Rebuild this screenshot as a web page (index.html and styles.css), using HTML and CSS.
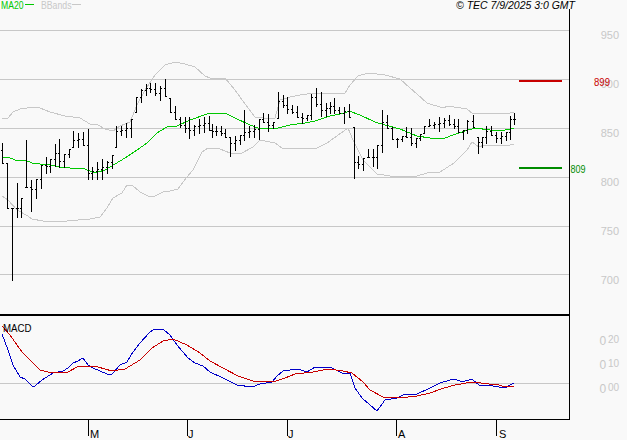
FILE: index.html
```html
<!DOCTYPE html>
<html lang="en">
<head>
<meta charset="utf-8">
<title>TEC chart</title>
<link rel="stylesheet" href="styles.css">
</head>
<body>
<svg class="chart" viewBox="0 0 627 440" width="627" height="440" xmlns="http://www.w3.org/2000/svg">
  <g class="grid">
    <path d="M0 30.5H569M0 79.5H569M0 128.5H569M0 177.5H569M0 226.5H569M0 274.5H569M0 383.5H569"/>
  </g>
  <g class="band">
    <polyline points="2,118 8,118 13,112 20,109 30,107.5 40,108 50,112 65,116 80,118 90,124 98,125 105,129 113,131 120,126 130,122 137,105 145,90 155,75 165,65 175,62 185,64 195,67 205,76 210,78 225,78 235,90 245,104 255,117 263,118 275,118 280,100 290,97 300,95 315,93 345,93 350,85 358,76 368,73 385,75 400,79 410,88 417,94 427,103 443,108 448,106 467,109 473,114 510,113 514,112"/>
    <polyline points="2,196 8,200 17,210 28,216 32,219 43,221 67,221 90,219 100,217 107,208 113,198 122,193 127,185 132,185 140,192 150,197 155,196 163,192 170,191 178,189 187,177 193,170 202,152 208,148 220,149 230,153 240,154 253,147 260,140 275,143 282,148 317,148 327,143 348,128 353,140 363,160 377,174 397,177 417,176 427,173 440,172 454,163 467,150 472,142 479,147 484,145 510,145 514,144"/>
  </g>
  <polyline class="ma" points="2,157 8,157 15,160 25,160 32,163 40,164 50,165 60,167 70,168 85,169 92,172 98,172 105,170 115,164 125,158 137,150 147,143 157,133 167,127 177,126 190,120 210,113 225,113 235,118 250,125 258,128 270,129 278,128 290,125 305,123 315,121 330,116 345,113 349,111 360,115 375,122 385,125 400,129 417,136 430,138 443,139 450,136 465,131 475,128 490,130 505,130 511,129 514,128"/>
  <path id="bars" class="bars"/>
  <path class="target-high" d="M519 81H562"/>
  <path class="target-low" d="M519 168H562"/>
  <polyline class="macd-line" points="2,334 8,350 13,365 20,377 25,379 32,386 35,386 42,380 53,373 63,371 68,368 73,363 78,361 83,358 88,365 93,368 100,371 107,374 112,374 120,365 127,362 133,352 140,343 150,332 155,329 163,329 170,335 177,345 188,358 195,363 203,366 210,372 223,378 237,385 252,387 260,384 272,382 277,376 283,371 298,369 307,372 315,367 330,367 342,373 350,373 355,388 362,398 377,411 385,400 397,398 405,394 417,394 430,388 440,383 450,380 455,379 462,382 472,379 480,386 487,385 499,387 505,388 510,385 514,383"/>
  <polyline class="macd-signal" points="2,326 10,335 22,352 30,360 40,370 48,372 68,372 77,367 90,366 98,367 112,371 125,369 140,360 152,348 163,341 173,339 187,345 200,353 210,361 223,368 238,376 253,381 273,382 285,378 295,374 313,372 328,369 343,371 352,373 363,382 370,390 383,397 397,398 408,397 417,396 430,393 444,388 455,385 472,382 489,384 499,385 505,387 514,386"/>
  <g class="frame">
    <path class="frame-thin" d="M569.5 9V419M0 419.5H570M88.5 419V436M187.5 419V436M287.5 419V436M396.5 419V436M496.5 419V436"/>
    <path class="frame-thick" d="M0 315H570"/>
  </g>
  <g class="legend-lines">
    <path class="ma-key" d="M25 4.5H34"/>
    <path class="band-key" d="M72 4.5H81"/>
  </g>
  <text class="label ma-text" x="1" y="8.5" textLength="22.5" lengthAdjust="spacingAndGlyphs">MA20</text>
  <text class="label band-text" x="41" y="8.5" textLength="30.5" lengthAdjust="spacingAndGlyphs">BBands</text>
  <text class="label copy" x="456" y="8.5" textLength="119" lengthAdjust="spacingAndGlyphs">© TEC 7/9/2025 3:0 GMT</text>
  <g class="label axis">
    <text x="619" y="39">950</text>
    <text x="619" y="87.5">900</text>
    <text x="619" y="137">850</text>
    <text x="619" y="186">800</text>
    <text x="619" y="235">750</text>
    <text x="619" y="284">700</text>
    <text x="619" y="345"><tspan class="int">0</tspan><tspan class="gap">.</tspan><tspan class="dec" dy="-2">20</tspan></text>
    <text x="619" y="369"><tspan class="int">0</tspan><tspan class="gap">.</tspan><tspan class="dec" dy="-2">10</tspan></text>
    <text x="619" y="393"><tspan class="int">0</tspan><tspan class="gap">.</tspan><tspan class="dec" dy="-2">00</tspan></text>
  </g>
  <text class="label red" x="594" y="86" textLength="16" lengthAdjust="spacingAndGlyphs">899</text>
  <text class="label green" x="570.5" y="173" textLength="15" lengthAdjust="spacingAndGlyphs">809</text>
  <text class="label macd" x="3" y="332" textLength="28.5" lengthAdjust="spacingAndGlyphs">MACD</text>
  <g class="label months">
    <text x="90" y="438">M</text>
    <text x="188" y="438">J</text>
    <text x="288" y="438">J</text>
    <text x="398" y="438">A</text>
    <text x="499" y="438">S</text>
  </g>
</svg>
<script src="chart.js"></script>
</body>
</html>
```

FILE: styles.css
```css
html, body {
  margin: 0;
  padding: 0;
  background: #f9f9f9;
}
.chart {
  display: block;
  background: #f9f9f9;
}
.grid path {
  fill: none;
  stroke: #c8c8c8;
  stroke-width: 1;
  shape-rendering: crispEdges;
}
.band polyline,
.ma,
.macd-line,
.macd-signal {
  fill: none;
  stroke-width: 1;
  shape-rendering: crispEdges;
}
.band polyline { stroke: #c8c8c8; }
.ma { stroke: #00c800; }
.macd-line { stroke: #0000c8; }
.macd-signal { stroke: #c80000; }
.bars {
  fill: none;
  stroke: #000;
  stroke-width: 1;
  shape-rendering: crispEdges;
}
.target-high,
.target-low {
  fill: none;
  stroke-width: 2;
  shape-rendering: crispEdges;
}
.target-high { stroke: #c80000; }
.target-low { stroke: #008c00; }
.frame path {
  fill: none;
  stroke: #000;
  shape-rendering: crispEdges;
}
.frame-thin { stroke-width: 1; }
.frame-thick { stroke-width: 2; }
.legend-lines path {
  fill: none;
  stroke-width: 1;
  shape-rendering: crispEdges;
}
.ma-key { stroke: #00c800; }
.band-key { stroke: #c8c8c8; }
.label {
  font-family: "Liberation Sans", Arial, sans-serif;
  font-size: 11px;
}
.ma-text { fill: #00c800; }
.band-text { fill: #c8c8c8; }
.copy { fill: #000; font-style: italic; }
.axis { fill: #c8c8c8; text-anchor: end; }
.int { font-size: 12px; }
.gap { fill: #f9f9f9; font-size: 6px; }
.dec { font-size: 10px; }
.red { fill: #c80000; }
.green { fill: #008c00; }
.macd { fill: #000; }
.months { fill: #000; }
```

FILE: chart.js
```js
var bars = [
  [2,143,163],[7,163,208],[12,208,280],[17,183,217],[21,198,217],[26,140,187],[31,180,211],[36,179,198],
  [41,165,188],[46,157,173],[50,159,172],[55,144,166],[59,139,167],[64,154,167],[69,149,157],[73,131,147],
  [78,133,147],[83,132,145],[88,129,179],[92,167,179],[97,162,179],[102,159,179],[107,161,173],[112,155,168],
  [116,126,147],[121,126,135],[126,123,137],[131,119,137],[136,97,112],[141,89,102],[146,84,95],[150,83,92],
  [155,83,95],[160,86,100],[165,79,96],[170,98,112],[175,106,119],[180,117,127],[185,117,132],[189,117,138],
  [194,125,135],[199,119,133],[204,117,132],[209,116,130],[212,124,137],[216,126,135],[221,126,135],[225,129,137],
  [230,137,156],[235,136,150],[240,135,144],[244,110,140],[249,126,137],[254,125,137],[259,119,139],[263,113,122],
  [268,114,131],[273,122,128],[278,92,118],[283,95,107],[287,97,113],[292,105,113],[297,106,117],[302,113,123],
  [307,115,120],[311,94,119],[316,88,106],[321,92,116],[326,103,116],[330,102,113],[334,98,113],[339,107,113],
  [344,107,123],[349,104,117],[354,127,178],[358,156,168],[363,158,170],[368,149,157],[373,149,166],[377,145,168],
  [382,110,152],[387,115,128],[392,127,139],[397,138,147],[402,136,141],[406,127,137],[411,128,145],[416,138,147],
  [420,134,140],[424,126,133],[429,119,126],[434,122,128],[439,117,131],[444,118,127],[449,115,125],[454,119,128],
  [458,119,132],[463,130,139],[467,120,133],[473,115,127],[478,137,153],[482,137,147],[486,126,143],[491,126,135],
  [496,132,142],[501,132,143],[506,132,140],[510,116,139],[514,113,124]
];

function clamp(v, lo, hi) {
  return Math.max(lo, Math.min(hi, v));
}

var d = "";
var prevClose = 150;
bars.forEach(function (bar, i) {
  var next = bars[i + 1] || bar;
  var open = Math.round(clamp(prevClose, bar[1], bar[2]));
  var close = Math.round(clamp((next[1] + next[2]) / 2, bar[1], bar[2]));
  var x = bar[0];
  d += "M" + (x + 0.5) + " " + bar[1] + "V" + (bar[2] + 1);
  d += "M" + (x - 1) + " " + (open + 0.5) + "h1";
  d += "M" + (x + 1) + " " + (close + 0.5) + "h1";
  prevClose = close;
});
document.getElementById("bars").setAttribute("d", d);
```
